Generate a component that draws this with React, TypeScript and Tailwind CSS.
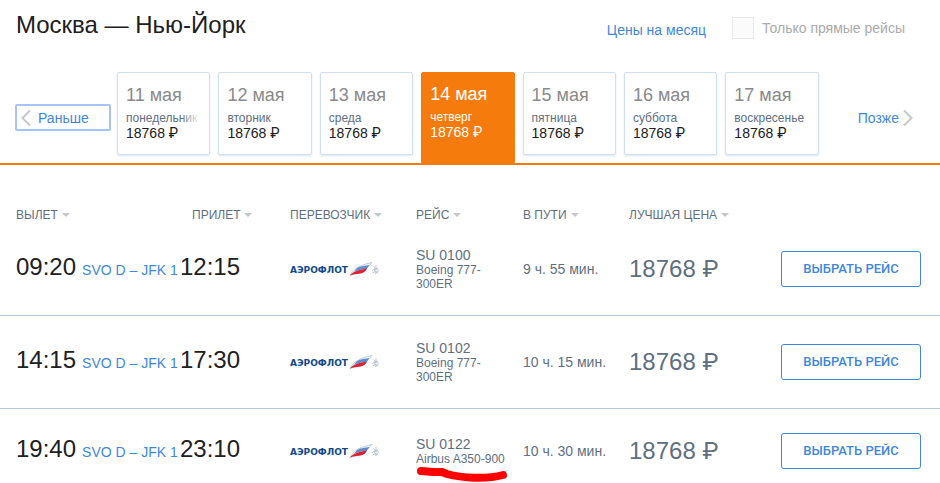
import React, { useState } from 'react';

interface DateOption {
  date: string;
  weekday: string;
  price: string;
  faded?: boolean;
}

interface Flight {
  number: string;
  plane: string;
  departure: string;
  arrival: string;
  route: string;
  duration: string;
  price: string;
  marked?: boolean;
}

const dates: DateOption[] = [
  { date: '11 мая', weekday: 'понедельник', price: '18768', faded: true },
  { date: '12 мая', weekday: 'вторник', price: '18768' },
  { date: '13 мая', weekday: 'среда', price: '18768' },
  { date: '14 мая', weekday: 'четверг', price: '18768' },
  { date: '15 мая', weekday: 'пятница', price: '18768' },
  { date: '16 мая', weekday: 'суббота', price: '18768' },
  { date: '17 мая', weekday: 'воскресенье', price: '18768' },
];

const flights: Flight[] = [
  { number: 'SU 0100', plane: 'Boeing 777-300ER', departure: '09:20', arrival: '12:15', route: 'SVO D – JFK 1', duration: '9 ч. 55 мин.', price: '18768' },
  { number: 'SU 0102', plane: 'Boeing 777-300ER', departure: '14:15', arrival: '17:30', route: 'SVO D – JFK 1', duration: '10 ч. 15 мин.', price: '18768' },
  { number: 'SU 0122', plane: 'Airbus A350-900', departure: '19:40', arrival: '23:10', route: 'SVO D – JFK 1', duration: '10 ч. 30 мин.', price: '18768', marked: true },
];

const Ruble = () => <span className="font-['Roboto',sans-serif] leading-none">₽</span>;

const Chevron: React.FC<{ back?: boolean }> = ({ back }) => (
  <svg width="10" height="18" viewBox="0 0 10 18" fill="none" stroke="#c8c8c8" strokeWidth="2" aria-hidden="true">
    <path d={back ? 'M9 1.5 1.5 9 9 16.5' : 'M1 1.5 8.5 9 1 16.5'} />
  </svg>
);

const SortButton: React.FC<{ label: string }> = ({ label }) => (
  <button className="flex items-center gap-1 whitespace-nowrap text-xs uppercase text-[#5f6f7f]">
    {label}
    <svg width="8" height="4" viewBox="0 0 8 4" fill="#c4c8cc" aria-hidden="true">
      <path d="M0 0h8L4 4z" />
    </svg>
  </button>
);

const AeroflotLogo = () => (
  <svg width="92" height="16" viewBox="0 0 92 16" role="img" aria-label="Аэрофлот" className="block">
    {/* flag */}
    <path d="M60 14.500C63 8 70 4 82 1.500 79 4 77.500 7 75 10 72 12 66 12.500 60 14.500z" fill="#f4f7fa" stroke="#a9b8ca" strokeWidth=".7" />
    <path d="M67 7C71 5 75 4.500 79.500 4L76.500 8C72 8 69 9 64 11z" fill="#5f8ccb" />
    <path d="M60 14.500C63 10.500 70 8.500 77 7.500 75.500 10.500 73 12.500 69 12.800 66 13 63 13.300 60 14.500z" fill="#e0202f" />
    <text x="0" y="12" fill="#114a87" fontSize="9" fontWeight="700" fontFamily="DejaVu Sans, sans-serif">
      АЭРОФЛОТ
    </text>
    {/* winged emblem */}
    <g stroke="#b0bdcb" strokeWidth=".8" fill="none">
      <path d="M82 10 85 7.500M82.500 12l3-1.500M83.500 5.500l2.500 2M86 4v8M84 8.500 88 7M85 12.500l3-1" />
      <circle cx="86.500" cy="9.500" r="1.800" />
    </g>
  </svg>
);

const DateCard: React.FC<{ item: DateOption; selected: boolean; onSelect: () => void }> = ({ item, selected, onSelect }) => (
  <button
    onClick={onSelect}
    aria-pressed={selected}
    className={
      selected
        ? 'flex min-w-0 flex-1 flex-col items-start rounded-t-xs border border-[#f57c0c] bg-[#f57c0c] px-2 pt-[11px] text-left text-white'
        : 'relative mb-2 flex min-w-0 flex-1 flex-col items-start rounded-xs border border-[#d0deed] px-2 pt-3 pb-[13px] text-left text-[#202020] shadow-[0_1px_2px_#dbe6f2]'
    }
  >
    <span className={selected ? 'text-lg leading-5' : 'text-lg leading-5 text-[#8a8a8a]'}>{item.date}</span>
    <span className={selected ? 'mt-[6px] text-xs leading-[15px]' : 'mt-[6px] text-xs leading-[15px] text-[#5f6f7f]'}>{item.weekday}</span>
    <span className="text-sm leading-[15px] whitespace-nowrap">
      {item.price} <Ruble />
    </span>
    {item.faded && <span className="absolute top-9 right-2 h-5 w-5 bg-linear-to-r from-white/0 to-white" />}
  </button>
);

const columns = ['Вылет', 'Прилет', 'Перевозчик', 'Рейс', 'В пути', 'Лучшая цена'];

const App: React.FC = () => {
  const [selected, setSelected] = useState(3);
  const [directOnly, setDirectOnly] = useState(false);

  return (
    <main className="overflow-hidden bg-white font-['Liberation_Sans',Arial,sans-serif] text-[#202020]">
      <header className="flex items-start justify-between pt-[9px] pr-[35px] pl-4">
        <h1 className="text-2xl">Москва — Нью-Йорк</h1>
        <div className="flex items-center pt-[7px]">
          <a href="#month" className="mr-[26px] pt-1 text-sm text-[#3f87dc]">
            Цены на месяц
          </a>
          <label className="flex items-center gap-2 text-sm leading-6 text-[#aaaaaa]">
            <input
              type="checkbox"
              checked={directOnly}
              onChange={(e) => setDirectOnly(e.target.checked)}
              className="size-[22px] appearance-none border border-[#e8e8e8] bg-[#fbfbfb] checked:bg-[#3f87dc]"
            />
            Только прямые рейсы
          </label>
        </div>
      </header>

      <nav className="mt-[31px] flex items-center border-b-2 border-[#f57c0c] pr-[27px] pl-[15px]" aria-label="Даты">
        <button className="mr-[6px] flex h-[27px] w-24 shrink-0 items-center gap-[7px] rounded-xs border-2 border-[#a5c4fa] pl-1 text-sm text-[#3f87dc]">
          <Chevron back />
          Раньше
        </button>
        <div className="flex min-w-0 flex-1 gap-2">
          {dates.map((item, i) => (
            <DateCard key={item.date} item={item} selected={i === selected} onSelect={() => setSelected(i)} />
          ))}
        </div>
        <button className="ml-[39px] flex shrink-0 items-center gap-1 text-sm text-[#3f87dc]">
          Позже
          <Chevron />
        </button>
      </nav>

      <table className="mt-[42px] w-full table-fixed border-collapse text-left">
        <colgroup>
          <col className="w-[180px]" />
          <col className="w-[110px]" />
          <col className="w-[126px]" />
          <col className="w-[107px]" />
          <col className="w-[106px]" />
          <col />
          <col className="w-[159px]" />
        </colgroup>
        <thead>
          <tr>
            {columns.map((label, i) => (
              <th key={label} className={i === 0 ? 'pl-4 font-normal' : i === 1 ? 'pl-3 font-normal' : 'p-0 font-normal'}>
                <SortButton label={label} />
              </th>
            ))}
            <td />
          </tr>
        </thead>
        <tbody>
          {flights.map((flight) => (
            <tr key={flight.number} className="border-b border-[#b5c7da] text-[#5f6f7f]">
              <td className="pb-1 pl-4 whitespace-nowrap">
                <span className="text-2xl text-[#202020]">{flight.departure}</span>
                <a href="#route" className="ml-[6px] text-sm text-[#3f87dc]">
                  {flight.route}
                </a>
              </td>
              <td className="pb-1 text-2xl text-[#202020]">{flight.arrival}</td>
              <td>
                <AeroflotLogo />
              </td>
              <td className="py-6 pr-3">
                <div className="text-sm leading-4">{flight.number}</div>
                <div className="relative text-xs leading-[14px]">
                  {flight.plane}
                  {flight.marked && (
                    <svg className="absolute top-full left-0" width="94" height="18" viewBox="0 0 94 18" fill="none" stroke="#fe0000" strokeLinecap="round" strokeLinejoin="round" strokeWidth="8" aria-hidden="true">
                      <path d="M5 5 17 6 26 6 31 8C46 12 70 13.500 87 9" />
                    </svg>
                  )}
                </div>
              </td>
              <td className="text-sm whitespace-nowrap">{flight.duration}</td>
              <td className="text-2xl whitespace-nowrap">
                {flight.price} <Ruble />
              </td>
              <td className="py-6 pr-[19px]">
                <button className="h-9 w-full rounded-[3px] border border-[#3f87dc] font-['Roboto',sans-serif] text-[13px] font-medium whitespace-nowrap text-[#3f87dc] uppercase">
                  Выбрать рейс
                </button>
              </td>
            </tr>
          ))}
        </tbody>
      </table>
    </main>
  );
};

export default App;
